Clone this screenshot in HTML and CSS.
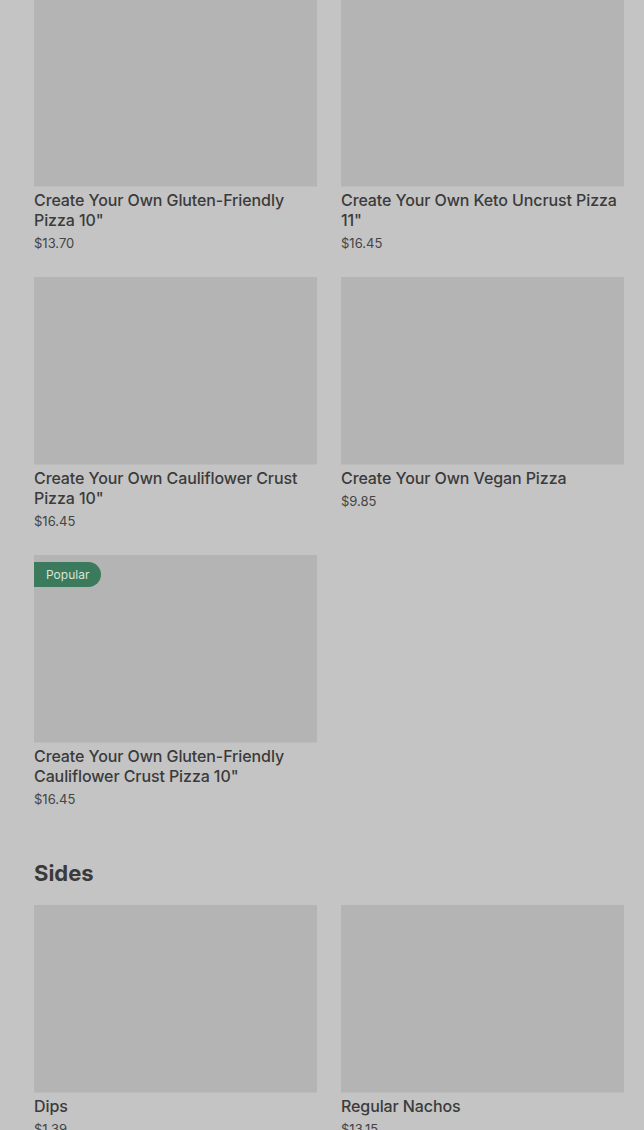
FILE: index.html
```html
<!DOCTYPE html>
<html>
<head>
<meta charset="utf-8">
<link rel="stylesheet" href="styles.css">
</head>
<body>
<main class="menu">
  <section class="section">
    <div class="grid first">
      <div class="card">
        <div class="thumb"></div>
        <div class="title">Create Your Own Gluten-Friendly Pizza 10"</div>
        <div class="price">$13.70</div>
      </div>
      <div class="card">
        <div class="thumb"></div>
        <div class="title">Create Your Own Keto Uncrust Pizza 11"</div>
        <div class="price">$16.45</div>
      </div>
      <div class="card">
        <div class="thumb"></div>
        <div class="title">Create Your Own Cauliflower Crust Pizza 10"</div>
        <div class="price">$16.45</div>
      </div>
      <div class="card">
        <div class="thumb"></div>
        <div class="title">Create Your Own Vegan Pizza</div>
        <div class="price">$9.85</div>
      </div>
      <div class="card">
        <div class="thumb"><span class="badge">Popular</span></div>
        <div class="title">Create Your Own Gluten-Friendly Cauliflower Crust Pizza 10"</div>
        <div class="price">$16.45</div>
      </div>
    </div>
  </section>
  <section class="section">
    <h2 class="heading">Sides</h2>
    <div class="grid">
      <div class="card">
        <div class="thumb"></div>
        <div class="title">Dips</div>
        <div class="price">$1.39</div>
      </div>
      <div class="card">
        <div class="thumb"></div>
        <div class="title">Regular Nachos</div>
        <div class="price">$13.15</div>
      </div>
    </div>
  </section>
</main>
</body>
</html>
```

FILE: styles.css
```css
html, body {
  margin: 0;
  padding: 0;
  background: #c4c4c4;
  overflow: hidden;
}
body {
  font-family: "Inter", "Liberation Sans", sans-serif;
  color: #3b3b3b;
}
.menu {
  padding: 0 20px 0 34px;
}
.grid {
  display: grid;
  grid-template-columns: 283px 283px;
  column-gap: 24px;
  row-gap: 24px;
  align-items: start;
}
.grid.first {
  margin-top: -1px;
}
.card {
  display: flex;
  flex-direction: column;
}
.thumb {
  position: relative;
  height: 188px;
  background: #b4b4b4;
  border-bottom: 1px solid #bcbcbc;
  box-sizing: border-box;
}
.title {
  margin-top: 3px;
  font-size: 16px;
  line-height: 20px;
  font-weight: 500;
  color: #3b3b3b;
  letter-spacing: -0.1px;
}
.price {
  margin-top: 4px;
  font-size: 13px;
  line-height: 19px;
  color: #444444;
}
.badge {
  position: absolute;
  left: 0;
  top: 7px;
  height: 25px;
  line-height: 25px;
  padding: 0 12px;
  font-size: 12px;
  color: #d6e6dc;
  background: #3b7a5c;
  border-radius: 0 13px 13px 0;
}
.heading {
  margin: 48px 0 16px;
  font-size: 22px;
  line-height: 32px;
  font-weight: 700;
  color: #3a3a3a;
}
```
